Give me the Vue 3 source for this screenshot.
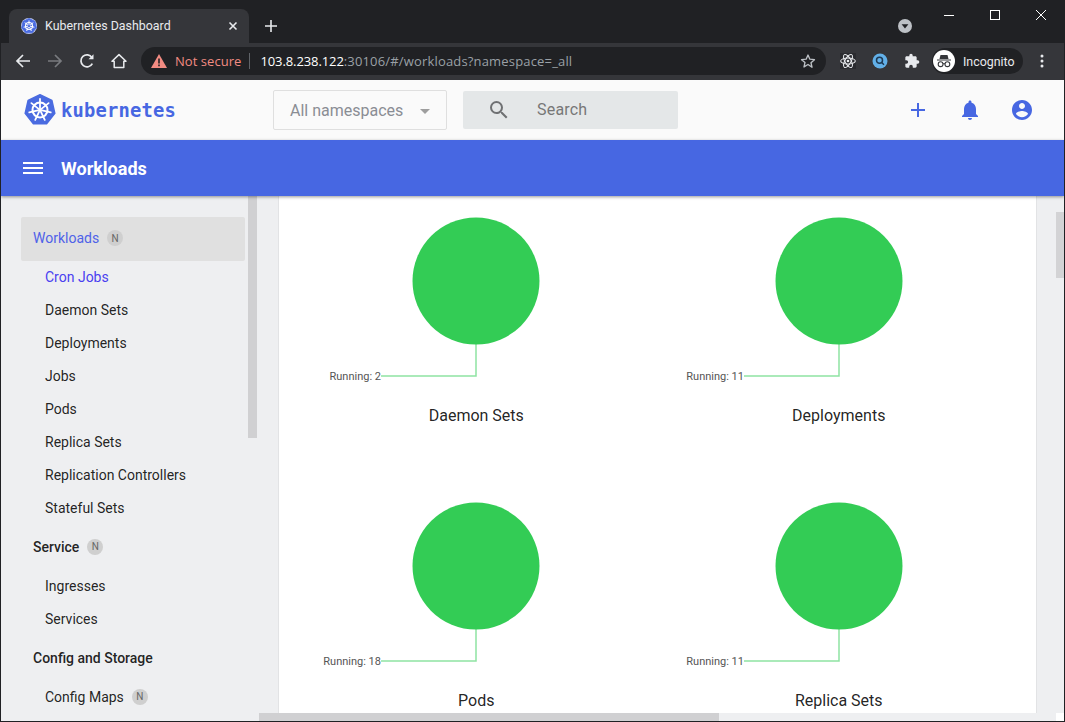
<script setup>
const cx = 16, cy = 16
const pt = (r, k) => {
  const a = (-90 + (k * 360) / 7) * Math.PI / 180
  return [cx + r * Math.cos(a), cy + r * Math.sin(a)]
}
const heptagon = Array.from({ length: 7 }, (_, k) => pt(15.2, k).map(n => n.toFixed(2)).join(',')).join(' ')
const spokes = Array.from({ length: 7 }, (_, k) => {
  const [x1, y1] = pt(2.2, k)
  const [x2, y2] = pt(11, k)
  return { x1, y1, x2, y2 }
})
const groups = [
  { name: 'Workloads', head: true, active: true, badge: true },
  { name: 'Cron Jobs', current: true },
  { name: 'Daemon Sets' },
  { name: 'Deployments' },
  { name: 'Jobs' },
  { name: 'Pods' },
  { name: 'Replica Sets' },
  { name: 'Replication Controllers' },
  { name: 'Stateful Sets' },
  { name: 'Service', head: true, badge: true },
  { name: 'Ingresses' },
  { name: 'Services' },
  { name: 'Config and Storage', head: true },
  { name: 'Config Maps', badge: true }
]
const charts = [
  { title: 'Daemon Sets', running: 2 },
  { title: 'Deployments', running: 11 },
  { title: 'Pods', running: 18 },
  { title: 'Replica Sets', running: 11 }
]
</script>

<template>
  <div class="window">
    <div class="tabstrip">
      <div class="tab">
        <svg class="favicon" viewBox="0 0 32 32">
          <circle cx="16" cy="16" r="16" fill="#d5dcf6" />
          <polygon :points="heptagon" fill="#4a6be0" stroke="#4a6be0" stroke-width="1.5" stroke-linejoin="round" />
          <circle cx="16" cy="16" r="7" fill="none" stroke="#fff" stroke-width="2.2" />
          <line v-for="(s, i) in spokes" :key="i" :x1="s.x1" :y1="s.y1" :x2="s.x2" :y2="s.y2" stroke="#fff" stroke-width="2" />
        </svg>
        <span class="tab-title">Kubernetes Dashboard</span>
        <svg class="tab-close" width="10" height="10" viewBox="0 0 10 10"><path d="M1.5 1.5l7 7M8.5 1.5l-7 7" stroke="#e8eaed" stroke-width="1.6" /></svg>
      </div>
      <svg class="newtab" width="14" height="14" viewBox="0 0 14 14"><path d="M7 1v12M1 7h12" stroke="#e8eaed" stroke-width="1.6" /></svg>
      <div class="tabsearch">
        <svg width="16" height="16" viewBox="0 0 16 16"><circle cx="8" cy="8" r="7" fill="#bdc1c6" /><path d="M4.6 6.2h6.8L8 10.4z" fill="#202124" /></svg>
      </div>
      <div class="winctl">
        <svg width="12" height="12" viewBox="0 0 12 12"><path d="M1 6.5h10" stroke="#fff" /></svg>
        <svg width="12" height="12" viewBox="0 0 12 12"><rect x="1.5" y="1.5" width="9" height="9" fill="none" stroke="#fff" /></svg>
        <svg width="12" height="12" viewBox="0 0 12 12"><path d="M1 1l10 10M11 1L1 11" stroke="#fff" /></svg>
      </div>
    </div>

    <div class="toolbar">
      <div class="nav">
        <svg width="16" height="16" viewBox="0 0 16 16"><path d="M15 8H2M8 2L2 8l6 6" fill="none" stroke="#e8eaed" stroke-width="1.7" /></svg>
        <svg width="16" height="16" viewBox="0 0 16 16"><path d="M1 8h13M8 2l6 6-6 6" fill="none" stroke="#797b7f" stroke-width="1.7" /></svg>
        <svg width="16" height="16" viewBox="0 0 16 16"><path d="M13.3 10.6A6 6 0 1 1 13 4.6" fill="none" stroke="#e8eaed" stroke-width="1.7" /><path d="M14.5 1.2v5h-5z" fill="#e8eaed" /></svg>
        <svg width="16" height="16" viewBox="0 0 16 16"><path d="M8 1.6L1 8.2h2.2v6.2h9.6V8.2H15z" fill="none" stroke="#e8eaed" stroke-width="1.5" stroke-linejoin="round" /></svg>
      </div>
      <div class="omnibox">
        <svg class="warn" width="16" height="14" viewBox="0 0 16 14"><path d="M8 0L16 14H0z" fill="#f28b82" /><path d="M7.2 4.6h1.6v5H7.2zM7.2 10.6h1.6v1.6H7.2z" fill="#202124" /></svg>
        <span class="notsecure">Not secure</span>
        <span class="sep"></span>
        <span class="url">103.8.238.122<span class="dim">:30106/#/workloads?namespace=_all</span></span>
        <svg class="star" width="16" height="16" viewBox="0 0 24 24"><path d="M12 3l2.8 6.3 6.9.7-5.2 4.6 1.5 6.8L12 17.3l-6 3.6 1.5-6.8L2.3 10l6.9-.7z" fill="none" stroke="#bdc1c6" stroke-width="2" stroke-linejoin="round" /></svg>
      </div>
      <div class="exts">
        <svg width="16" height="16" viewBox="0 0 24 24">
          <rect width="24" height="24" fill="#2a2b2f" />
          <g fill="none" stroke="#e8eaed" stroke-width="1.6"><ellipse cx="12" cy="12" rx="11" ry="4.5" /><ellipse cx="12" cy="12" rx="11" ry="4.5" transform="rotate(60 12 12)" /><ellipse cx="12" cy="12" rx="11" ry="4.5" transform="rotate(120 12 12)" /></g>
          <circle cx="12" cy="12" r="2" fill="#e8eaed" />
        </svg>
        <svg width="16" height="16" viewBox="0 0 16 16"><circle cx="8" cy="8" r="7.5" fill="#62b0e8" /><circle cx="7.5" cy="7.3" r="3" fill="none" stroke="#1d3a55" stroke-width="1.5" /><path d="M9.7 9.5l2.3 2.3" stroke="#1d3a55" stroke-width="1.5" /></svg>
        <svg width="16" height="16" viewBox="0 0 24 24"><path d="M20.5 11H19V7c0-1.100-.9-2-2-2h-4V3.500a2.500 2.500 0 0 0-5 0V5H4c-1.100 0-2 .9-2 2v3.800h1.500a2.700 2.700 0 0 1 0 5.400H2V20c0 1.100.9 2 2 2h3.800v-1.500a2.700 2.700 0 0 1 5.400 0V22H17c1.100 0 2-.9 2-2v-4h1.500a2.500 2.500 0 0 0 0-5z" fill="#e8eaed" /></svg>
      </div>
      <div class="incognito">
        <svg width="22" height="22" viewBox="0 0 22 22">
          <circle cx="11" cy="11" r="11" fill="#fff" />
          <path d="M7.5 5h7l1 4h-9zM4 9.500h14v1H4z" fill="#35363a" />
          <g fill="none" stroke="#35363a" stroke-width="1.1"><circle cx="7.6" cy="14.200" r="2.400" /><circle cx="14.400" cy="14.200" r="2.400" /><path d="M10 13.800h2" /></g>
        </svg>
        <span>Incognito</span>
      </div>
      <svg class="kebab" width="4" height="14" viewBox="0 0 4 14"><circle cx="2" cy="2" r="1.500" fill="#e8eaed" /><circle cx="2" cy="7" r="1.500" fill="#e8eaed" /><circle cx="2" cy="12" r="1.500" fill="#e8eaed" /></svg>
    </div>

    <header class="appbar">
      <div class="brand">
        <svg width="32" height="32" viewBox="0 0 32 32">
          <polygon :points="heptagon" fill="#4a6be0" stroke="#4a6be0" stroke-width="1.500" stroke-linejoin="round" />
          <circle cx="16" cy="16" r="7.500" fill="none" stroke="#fff" stroke-width="2" />
          <line v-for="(s, i) in spokes" :key="i" :x1="s.x1" :y1="s.y1" :x2="s.x2" :y2="s.y2" stroke="#fff" stroke-width="1.800" stroke-linecap="round" />
          <circle cx="16" cy="16" r="2" fill="#fff" />
        </svg>
        <span class="wordmark">kubernetes</span>
      </div>
      <div class="nsselect">
        <span>All namespaces</span>
        <i class="caret"></i>
      </div>
      <div class="search">
        <svg width="24" height="24" viewBox="0 0 24 24"><path d="M15.500 14h-.79l-.28-.27A6.470 6.470 0 0 0 16 9.500 6.500 6.500 0 1 0 9.500 16c1.610 0 3.090-.59 4.230-1.570l.27.28v.79l5 4.990L20.490 19l-4.990-5zm-6 0C7.010 14 5 11.990 5 9.500S7.010 5 9.500 5 14 7.010 14 9.500 11.990 14 9.500 14z" fill="#6f7173" /></svg>
        <span>Search</span>
      </div>
      <div class="actions">
        <svg width="24" height="24" viewBox="0 0 24 24"><path d="M19 13h-6v6h-2v-6H5v-2h6V5h2v6h6v2z" fill="#4767e2" /></svg>
        <svg width="24" height="24" viewBox="0 0 24 24"><path d="M12 22c1.100 0 2-.9 2-2h-4c0 1.100.89 2 2 2zm6-6v-5c0-3.070-1.640-5.640-4.500-6.320V4c0-.83-.67-1.500-1.500-1.500s-1.500.67-1.500 1.500v.68C7.630 5.360 6 7.920 6 11v5l-2 2v1h16v-1l-2-2z" fill="#4767e2" /></svg>
        <svg width="24" height="24" viewBox="0 0 24 24"><path d="M12 2C6.480 2 2 6.480 2 12s4.480 10 10 10 10-4.480 10-10S17.520 2 12 2zm0 3c1.660 0 3 1.340 3 3s-1.340 3-3 3-3-1.340-3-3 1.340-3 3-3zm0 14.200c-2.500 0-4.710-1.280-6-3.220.03-1.990 4-3.080 6-3.080 1.990 0 5.970 1.090 6 3.080-1.290 1.940-3.500 3.220-6 3.220z" fill="#4767e2" /></svg>
      </div>
    </header>

    <div class="titlebar">
      <svg width="20" height="12" viewBox="0 0 20 12"><path d="M0 0h20v2H0zM0 5h20v2H0zM0 10h20v2H0z" fill="#fff" /></svg>
      <span>Workloads</span>
    </div>

    <div class="body">
      <aside class="sidebar">
        <nav class="menu">
          <div
            v-for="g in groups"
            :key="g.name"
            class="item"
            :class="{ head: g.head, active: g.active, current: g.current }"
          >
            <span>{{ g.name }}</span>
            <span v-if="g.badge" class="badge">N</span>
          </div>
        </nav>
        <div class="thumb-side"></div>
      </aside>

      <main class="card">
        <section v-for="c in charts" :key="c.title" class="chart">
          <svg class="plot" width="362" height="204" viewBox="0 0 362 204">
            <path d="M181 145V180H86" fill="none" stroke="#8fe3a3" stroke-width="1.500" />
            <circle cx="181" cy="85" r="63.500" fill="#33cc55" />
            <text x="86" y="184" text-anchor="end" class="running">Running: {{ c.running }}</text>
          </svg>
          <div class="chart-title">{{ c.title }}</div>
        </section>
      </main>

      <div class="gutter"></div>
      <div class="thumb-right"></div>
      <div class="hscroll"><div class="hthumb"></div></div>
      <div class="corner"></div>
    </div>
  </div>
</template>

<style>
html, body { margin: 0; background: #202124; overflow: hidden; }
</style>

<style scoped>
.window {
  width: 1065px;
  height: 722px;
  box-sizing: border-box;
  border: 1px solid #202124;
  border-top: 0;
  overflow: hidden;
  display: flex;
  flex-direction: column;
  font-family: Roboto, sans-serif;
  background: #fff;
}
.tabstrip {
  height: 43px;
  flex: none;
  box-sizing: border-box;
  background: #202124;
  display: flex;
  align-items: flex-end;
  padding-left: 8px;
  position: relative;
}
.tab {
  width: 240px;
  height: 34px;
  box-sizing: border-box;
  background: #35363a;
  border-radius: 8px 8px 0 0;
  display: flex;
  align-items: center;
  padding: 0 11px 0 12px;
  color: #e8eaed;
}
.favicon { width: 16px; height: 16px; flex: none; }
.tab-title {
  margin: 0 0 2px 8px;
  font: 12.400px Roboto, sans-serif;
  flex: 1;
}
.tab-close { flex: none; }
.newtab { margin: 0 0 10px 15px; }
.tabsearch {
  margin: 0 0 9px 619px;
  height: 16px;
  display: flex;
}
.winctl {
  position: absolute;
  top: 9px;
  right: 17px;
  display: flex;
  gap: 34px;
}
.toolbar {
  height: 37px;
  flex: none;
  box-sizing: border-box;
  padding-bottom: 1px;
  background: #35363a;
  display: flex;
  align-items: center;
  padding-left: 14px;
  color: #e8eaed;
}
.nav { display: flex; gap: 16px; width: 126px; flex: none; }
.omnibox {
  width: 685px;
  height: 28px;
  flex: none;
  background: #202124;
  border-radius: 14px;
  display: flex;
  align-items: center;
  padding-left: 10px;
  box-sizing: border-box;
  font: 13px "Open Sans", sans-serif;
}
.warn { flex: none; }
.notsecure { color: #f28b82; margin-left: 8px; letter-spacing: .05px; }
.sep { width: 1px; height: 16px; background: #5f6368; margin: 0 10px 0 8px; }
.url { color: #fff; flex: 1; letter-spacing: -.1px; }
.dim { color: #9aa0a6; letter-spacing: .17px; }
.star { margin-right: 10px; }
.exts { display: flex; gap: 16px; margin-left: 14px; flex: none; }
.incognito {
  width: 91px;
  height: 26px;
  margin-left: 12px;
  box-sizing: border-box;
  background: #202124;
  border-radius: 13px;
  display: flex;
  align-items: center;
  padding-left: 1px;
  gap: 8px;
  font: 12.400px Roboto, sans-serif;
  flex: none;
}
.kebab { margin-left: 17px; }
.appbar {
  height: 60px;
  flex: none;
  background: #fafafa;
  display: flex;
  align-items: center;
  position: relative;
}
.brand { display: flex; align-items: center; width: 272px; padding-left: 23px; box-sizing: border-box; flex: none; }
.wordmark {
  font: bold 18.800px "DejaVu Sans Mono", monospace;
  color: #4767e2;
  margin-left: 5px;
  letter-spacing: .2px;
}
.nsselect {
  width: 174px;
  height: 40px;
  box-sizing: border-box;
  border: 1px solid #dfdfdf;
  border-radius: 2px;
  display: flex;
  align-items: center;
  padding-left: 16px;
  font-size: 16px;
  color: #8a8d94;
  flex: none;
  position: relative;
}
.caret {
  position: absolute;
  right: 16px;
  top: 18px;
  border: 5px solid transparent;
  border-top-color: #9e9e9e;
  border-bottom: 0;
}
.search {
  width: 215px;
  height: 38px;
  margin-left: 16px;
  background: #e4e7e8;
  border-radius: 2px;
  display: flex;
  align-items: center;
  padding-left: 24px;
  box-sizing: border-box;
  color: #777;
  font-size: 16px;
  flex: none;
}
.search span { margin: 0 0 2px 26px; letter-spacing: .2px; }
.actions {
  margin-left: auto;
  margin-right: 30px;
  display: flex;
  gap: 28px;
}
.titlebar {
  height: 56px;
  flex: none;
  background: #4767e2;
  box-shadow: 0 1px 3px rgba(0,0,0,.4);
  display: flex;
  align-items: center;
  padding-left: 22px;
  color: #fff;
  font-size: 18px;
  font-weight: 700;
  position: relative;
  z-index: 2;
}
.titlebar span { margin-left: 18px; }
.body {
  flex: 1;
  min-height: 0;
  display: flex;
  position: relative;
  background: #eeeff1;
  overflow: hidden;
}
.sidebar {
  width: 278px;
  height: 100%;
  flex: none;
  box-sizing: border-box;
  border-right: 1px solid #e2e3e5;
  position: relative;
  overflow: hidden;
  padding: 21px 0 0 20px;
}
.menu { width: 224px; }
.item {
  height: 33px;
  box-sizing: border-box;
  padding-bottom: 2px;
  display: flex;
  align-items: center;
  padding-left: 24px;
  font-size: 14px;
  color: rgba(0,0,0,.87);
}
.item.head {
  font-weight: 500;
  padding-left: 12px;
  height: 45px;
}
.item.active {
  background: #e0e0e0;
  border-radius: 2px;
  color: #4f62e8;
  font-weight: 400;
  height: 44px;
}
.item.current { color: #4a3ff0; }
.badge {
  width: 16px;
  height: 16px;
  border-radius: 50%;
  background: #cfcfcf;
  color: #666;
  font-size: 10px;
  font-weight: 400;
  display: flex;
  align-items: center;
  justify-content: center;
  margin-left: 8px;
}
.thumb-side {
  position: absolute;
  left: 247px;
  top: 0;
  width: 9px;
  height: 242px;
  background: #d0d0d2;
}
.card {
  width: 758px;
  height: 100%;
  flex: none;
  background: #fff;
  overflow: hidden;
  box-sizing: border-box;
  padding: 0 16px;
  display: grid;
  grid-template-columns: 362.5px 362.5px;
  grid-auto-rows: 285px;
  align-content: start;
  border-right: 1px solid #e2e3e5;
}
.chart { display: flex; flex-direction: column; align-items: center; }
.plot { flex: none; display: block; }
.running { font: 11px Roboto, sans-serif; fill: #555; }
.chart-title {
  margin-top: 6px;
  font-size: 16px;
  line-height: 20px;
  color: rgba(0,0,0,.87);
}
.gutter { flex: 1; }
.thumb-right {
  position: absolute;
  right: 0;
  top: 16px;
  width: 8px;
  height: 66px;
  background: #d3d3d5;
}
.hscroll {
  position: absolute;
  left: 258px;
  right: 8px;
  bottom: 0;
  height: 8px;
  background: #eeeff1;
}
.hthumb { width: 460px; height: 100%; background: #d0d0d2; }
.corner {
  position: absolute;
  right: 0;
  bottom: 0;
  width: 8px;
  height: 8px;
  background: #fff;
}
</style>
